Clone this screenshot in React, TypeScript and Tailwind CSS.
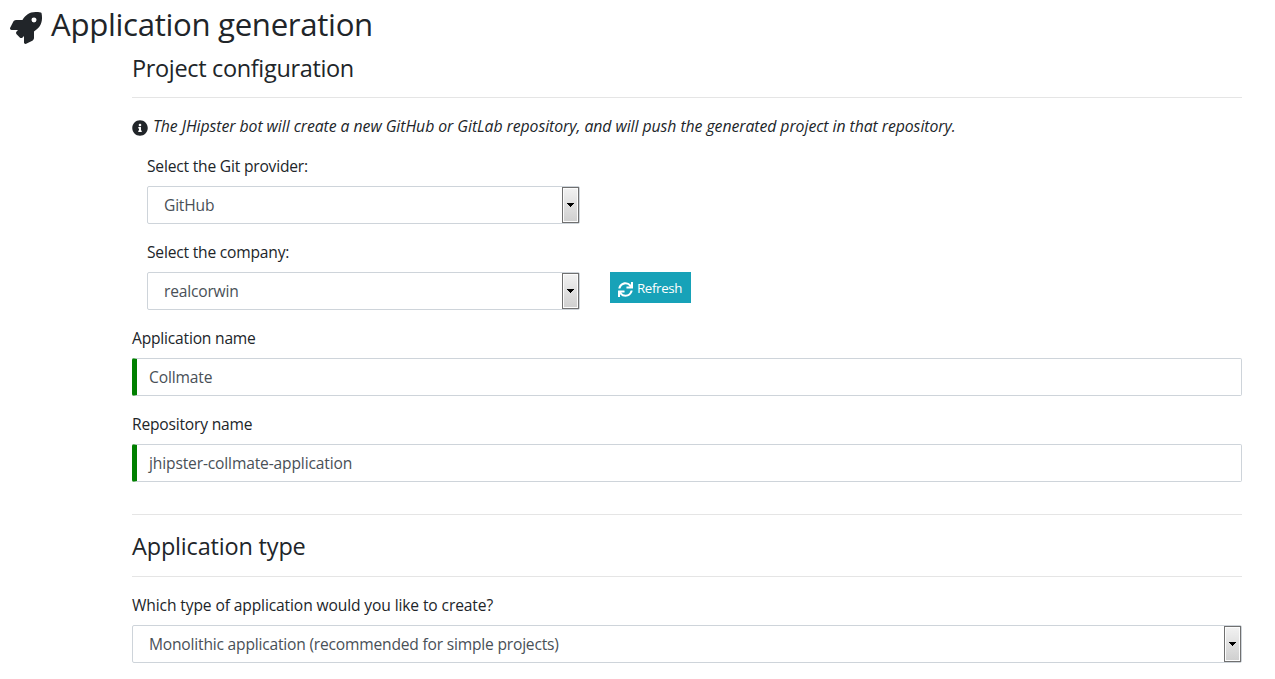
import type { ReactNode } from "react";
import { FaInfoCircle, FaRocket, FaSync } from "react-icons/fa";

function Label({ tracking = "tracking-[-0.2px]", children }: { tracking?: string; children: ReactNode }) {
  return <label className={`mb-2 block h-6 text-[15.6px] leading-6 ${tracking}`}>{children}</label>;
}

function SelectBox({ value }: { value: string }) {
  return (
    <div className="flex h-[38px] w-full justify-between rounded-[2px] border border-[#ced4da] bg-white text-[15.6px] leading-9 tracking-[-0.2px] text-[#495057]">
      <span className="pl-4">{value}</span>
      <span className="flex w-[17px] items-center justify-center border border-[#707070] bg-linear-to-b from-[#f2f2f2] to-[#cfcfcf] shadow-[inset_0_0_0_1px_#fcfcfc]">
        <svg width="7" height="4" viewBox="0 0 7 4" shapeRendering="crispEdges">
          <path d="M0 0h7v1H6v1H5v1H4v1H3V3H2V2H1V1H0z" fill="#000" />
        </svg>
      </span>
    </div>
  );
}

function TextBox({ value }: { value: string }) {
  return (
    <div className="h-[38px] w-full rounded-[2px] border border-l-[5px] border-[#ced4da] border-l-[#008000] bg-white pl-3 text-[15.6px] leading-9 tracking-[-0.15px] text-[#495057]">
      {value}
    </div>
  );
}

export default function App() {
  return (
    <main className="h-[679px] w-[1275px] overflow-hidden bg-white font-['Open_Sans',sans-serif] text-[#212529]">
      <h1 className="flex h-[53px] items-start pl-[10px] pt-[5px] text-[31.2px] leading-[38px] tracking-[-0.32px]">
        <FaRocket className="mr-[9px] mt-[7px] size-8 shrink-0" />
        <span>Application generation</span>
      </h1>

      <div className="ml-[132px] w-[1110px]">
        <section>
          <h2 className="h-[44px] text-[23.5px] leading-[30px] tracking-[-0.34px]">Project configuration</h2>
          <hr className="border-[#e5e5e5]" />
          <p className="mt-4 flex h-6 items-center text-[15.8px] italic leading-6 tracking-[-0.06px]">
            <FaInfoCircle className="mr-[5px] mt-[4px] size-4 shrink-0" />
            <span>The JHipster bot will create a new GitHub or GitLab repository, and will push the generated project in that repository.</span>
          </p>

          <div className="mt-4 pl-[15px]">
            <div className="w-[433px]">
              <Label>Select the Git provider:</Label>
              <SelectBox value="GitHub" />
            </div>
            <div className="mt-4 flex items-end gap-[30px]">
              <div className="w-[433px]">
                <Label>Select the company:</Label>
                <SelectBox value="realcorwin" />
              </div>
              <button type="button" className="mb-[7px] flex h-[31px] w-[81px] items-center bg-[#17a2b8] pl-2 text-[13.3px] leading-[21px] text-white">
                <FaSync className="mr-1 mt-[3px] size-[15px] shrink-0" />
                <span className="mt-px tracking-[-0.35px]">Refresh</span>
              </button>
            </div>
          </div>

          <div className="mt-4">
            <Label>Application name</Label>
            <TextBox value="Collmate" />
          </div>
          <div className="mt-4">
            <Label>Repository name</Label>
            <TextBox value="jhipster-collmate-application" />
          </div>
        </section>

        <hr className="mt-8 border-[#e5e5e5]" />

        <section className="pt-4">
          <h2 className="h-[45px] text-[23.5px] leading-[30px] tracking-[-0.18px]">Application type</h2>
          <hr className="border-[#e5e5e5]" />
          <div className="mt-4">
            <Label tracking="tracking-[-0.12px]">Which type of application would you like to create?</Label>
            <SelectBox value="Monolithic application (recommended for simple projects)" />
          </div>
        </section>
      </div>
    </main>
  );
}
